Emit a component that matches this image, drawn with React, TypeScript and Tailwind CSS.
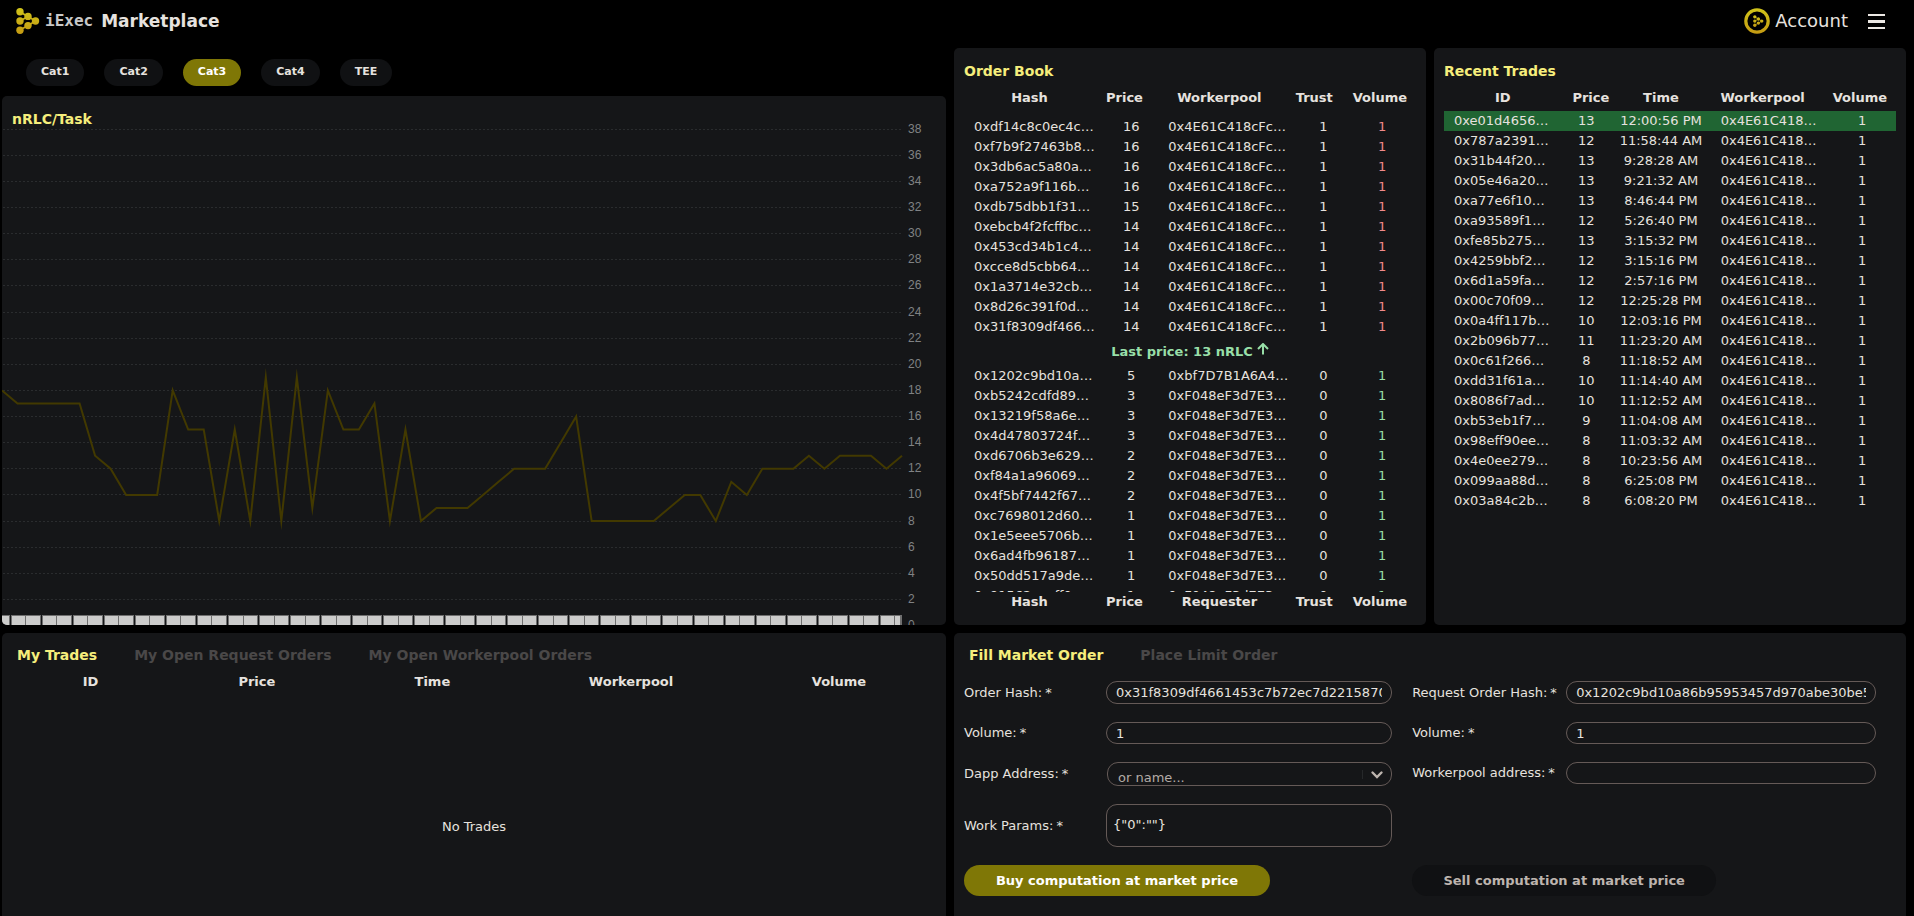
import React, { useState } from "react";

interface Order {
  hash: string;
  price: number;
  party: string;
  trust: number;
  volume: number;
}

interface Trade {
  id: string;
  price: number;
  time: string;
}

const POOL = "0x4E61C418cFc…";
const REQUESTER = "0xF048eF3d7E3…";

const ask = (hash: string, price: number): Order => ({
  hash,
  price,
  party: POOL,
  trust: 1,
  volume: 1,
});

const bid = (hash: string, price: number, party = REQUESTER): Order => ({
  hash,
  price,
  party,
  trust: 0,
  volume: 1,
});

const asks: Order[] = [
  ask("0xdf14c8c0ec4c…", 16),
  ask("0xf7b9f27463b8…", 16),
  ask("0x3db6ac5a80a…", 16),
  ask("0xa752a9f116b…", 16),
  ask("0xdb75dbb1f31…", 15),
  ask("0xebcb4f2fcffbc…", 14),
  ask("0x453cd34b1c4…", 14),
  ask("0xcce8d5cbb64…", 14),
  ask("0x1a3714e32cb…", 14),
  ask("0x8d26c391f0d…", 14),
  ask("0x31f8309df466…", 14),
];

const bids: Order[] = [
  bid("0x1202c9bd10a…", 5, "0xbf7D7B1A6A4…"),
  bid("0xb5242cdfd89…", 3),
  bid("0x13219f58a6e…", 3),
  bid("0x4d47803724f…", 3),
  bid("0xd6706b3e629…", 2),
  bid("0xf84a1a96069…", 2),
  bid("0x4f5bf7442f67…", 2),
  bid("0xc7698012d60…", 1),
  bid("0x1e5eee5706b…", 1),
  bid("0x6ad4fb96187…", 1),
  bid("0x50dd517a9de…", 1),
  bid("0x91562eacff0…", 1),
];

const trades: Trade[] = [
  { id: "0xe01d4656…", price: 13, time: "12:00:56 PM" },
  { id: "0x787a2391…", price: 12, time: "11:58:44 AM" },
  { id: "0x31b44f20…", price: 13, time: "9:28:28 AM" },
  { id: "0x05e46a20…", price: 13, time: "9:21:32 AM" },
  { id: "0xa77e6f10…", price: 13, time: "8:46:44 PM" },
  { id: "0xa93589f1…", price: 12, time: "5:26:40 PM" },
  { id: "0xfe85b275…", price: 13, time: "3:15:32 PM" },
  { id: "0x4259bbf2…", price: 12, time: "3:15:16 PM" },
  { id: "0x6d1a59fa…", price: 12, time: "2:57:16 PM" },
  { id: "0x00c70f09…", price: 12, time: "12:25:28 PM" },
  { id: "0x0a4ff117b…", price: 10, time: "12:03:16 PM" },
  { id: "0x2b096b77…", price: 11, time: "11:23:20 AM" },
  { id: "0x0c61f266…", price: 8, time: "11:18:52 AM" },
  { id: "0xdd31f61a…", price: 10, time: "11:14:40 AM" },
  { id: "0x8086f7ad…", price: 10, time: "11:12:52 AM" },
  { id: "0xb53eb1f7…", price: 9, time: "11:04:08 AM" },
  { id: "0x98eff90ee…", price: 8, time: "11:03:32 AM" },
  { id: "0x4e0ee279…", price: 8, time: "10:23:56 AM" },
  { id: "0x099aa88d…", price: 8, time: "6:25:08 PM" },
  { id: "0x03a84c2b…", price: 8, time: "6:08:20 PM" },
];

const prices = [
  18, 17, 17, 17, 17, 17, 13, 12, 10, 10, 10, 18, 15, 15, 8, 15, 8, 19, 8, 19,
  9, 18, 15, 15, 17, 8, 15, 8, 9, 9, 9, 10, 11, 12, 12, 12, 14, 16, 8, 8, 8, 8,
  8, 9, 10, 10, 8, 11, 10, 12, 12, 12, 13, 12, 13, 13, 13, 12, 13,
];

const LogoMark: React.FC = () => (
  <>
    <path
      d="M4 4L12 8.500L4 13M19.500 13L12 17.500L4 22M12 8.500L19.500 13"
      stroke="url(#gold)"
      strokeWidth="1.800"
      fill="none"
    />
    <g fill="url(#gold)">
      <circle cx="4" cy="3.700" r="3.700" />
      <circle cx="12" cy="8.400" r="3.700" />
      <circle cx="4" cy="13" r="3.700" />
      <circle cx="19.500" cy="13" r="3.700" />
      <circle cx="12" cy="17.600" r="3.700" />
      <circle cx="4" cy="22.300" r="3.700" />
    </g>
  </>
);

const Header: React.FC = () => (
  <header className="mb-1.5 flex h-[42px] items-center justify-between pr-[29px] pl-4">
    <a href="#home" className="flex items-center">
      <svg width="24" height="26" viewBox="0 0 24 26" aria-hidden="true">
        <defs>
          <linearGradient
            id="gold"
            gradientUnits="userSpaceOnUse"
            x1="0"
            y1="0"
            x2="0"
            y2="26"
          >
            <stop offset="0" stopColor="#d0c41a" />
            <stop offset="1" stopColor="#c49a12" />
          </linearGradient>
        </defs>
        <LogoMark />
      </svg>
      <span className="ml-[5px] font-['DejaVu_Sans_Mono',monospace] text-base leading-5 font-bold text-[#c8c8c8]">
        iExec
      </span>
      <span className="ml-2 text-[17px] leading-5 font-bold">Marketplace</span>
    </a>
    <div className="flex items-center gap-5">
      <button type="button" className="flex items-center gap-[5px]">
        <svg width="26" height="26" viewBox="0 0 26 26" aria-hidden="true">
          <circle
            cx="13"
            cy="13"
            r="11.200"
            fill="none"
            stroke="url(#gold)"
            strokeWidth="3.200"
          />
          <g transform="translate(9 7.200) scale(0.450)">
            <LogoMark />
          </g>
        </svg>
        <span className="text-lg leading-6">Account</span>
      </button>
      <button type="button" aria-label="Menu" className="flex flex-col gap-1">
        <span className="h-[2px] w-[17px] bg-[#ece8e4]" />
        <span className="h-[3px] w-[17px] bg-[#ece8e4]" />
        <span className="h-[2px] w-[17px] bg-[#ece8e4]" />
      </button>
    </div>
  </header>
);

const categories = ["Cat1", "Cat2", "Cat3", "Cat4", "TEE"];

const Categories: React.FC = () => {
  const [selected, setSelected] = useState("Cat3");

  return (
    <nav className="flex gap-5 pt-[11px] pb-2.5 pl-6">
      {categories.map((cat) => (
        <button
          key={cat}
          type="button"
          onClick={() => setSelected(cat)}
          className={`h-[27px] rounded-full px-[15px] text-[11px] font-bold ${
            cat === selected ? "bg-[#7f7706] text-white" : "bg-[#101113]"
          }`}
        >
          {cat}
        </button>
      ))}
    </nav>
  );
};

const STEP = 900 / (prices.length - 1);
const priceY = (price: number) => 529.5 - price * 13.06;

const PriceChart: React.FC = () => {
  const ticks = Array.from({ length: 20 }, (_, i) => i * 2);
  const points = prices.map((p, i) => `${i * STEP},${priceY(p)}`).join(" ");

  return (
    <section className="relative overflow-hidden rounded-[5px] bg-[#151618]">
      <h2 className="absolute top-3 left-2.5 text-sm leading-[22px] font-bold text-[#f6ee7c]">
        nRLC/Task
      </h2>
      <svg viewBox="0 0 944 529" className="block w-full" role="img">
        <g stroke="#2a2c2e" strokeDasharray="2 2" shapeRendering="crispEdges">
          {ticks.slice(1).map((t) => (
            <line key={t} x1="1" x2="900" y1={priceY(t)} y2={priceY(t)} />
          ))}
        </g>
        <g
          fill="#808284"
          fontSize="12"
          fontFamily="Liberation Sans, Arial, sans-serif"
        >
          {ticks.map((t) => (
            <text key={t} x="906" y={priceY(t) + 3.5}>
              {t}
            </text>
          ))}
        </g>
        <polyline
          points={points}
          fill="none"
          stroke="#423900"
          strokeWidth="2"
          strokeMiterlimit="20"
        />
        <g shapeRendering="crispEdges">
          <rect x="0" y="519" width="900" height="10" fill="#6f6f6f" />
          {prices.map((_, i) => {
            const left = Math.max(0, Math.round((i - 0.5) * STEP) + 1);
            const right = Math.min(899, Math.round((i + 0.5) * STEP));
            return (
              <rect
                key={i}
                x={left + (left && i % 2 ? 1 : 0)}
                y="520"
                width={right - left - 1}
                height="9"
                fill="#cccccb"
              />
            );
          })}
          {prices.map((_, i) =>
            i % 2 ? (
              <rect
                key={i}
                x={Math.round((i - 0.5) * STEP)}
                y="519"
                width="1"
                height="10"
                fill="#151618"
              />
            ) : null
          )}
        </g>
      </svg>
    </section>
  );
};

const bookHead = ["w-[29%]", "w-[13%]", "w-[29%]", "w-[13%]", "w-[16%]"];

const BookLabels: React.FC<{ party: string }> = ({ party }) => (
  <tr>
    {["Hash", "Price", party, "Trust", "Volume"].map((label, i) => (
      <th key={label} className={`${bookHead[i]} p-0`}>
        {label}
      </th>
    ))}
  </tr>
);

const OrderRow: React.FC<{ order: Order; color: string }> = ({
  order,
  color,
}) => (
  <tr className="table h-5 w-full table-fixed text-center">
    <td className="w-[31%] p-0 pl-2.5 text-left whitespace-nowrap">
      {order.hash}
    </td>
    <td className="w-[12%] p-0">{order.price}</td>
    <td className="w-[31%] p-0 pl-2.5 text-left whitespace-nowrap">
      {order.party}
    </td>
    <td className="w-[11%] p-0">{order.trust}</td>
    <td className={`w-[15%] p-0 ${color}`}>{order.volume}</td>
  </tr>
);

const PanelTitle: React.FC<{ children: React.ReactNode }> = ({ children }) => (
  <h2 className="pt-3 pb-0.5 text-sm leading-[22px] font-bold text-[#f6ee7c]">
    {children}
  </h2>
);

const OrderBook: React.FC = () => (
  <section className="rounded-[5px] bg-[#151618] px-2.5">
    <PanelTitle>Order Book</PanelTitle>
    <table className="block text-[13px] leading-5">
      <thead className="table h-[27px] w-full table-fixed">
        <BookLabels party="Workerpool" />
      </thead>
      <tbody className="block pt-1.5">
        {asks.map((order) => (
          <OrderRow key={order.hash} order={order} color="text-[#f08a8a]" />
        ))}
      </tbody>
      <tbody className="table h-[29px] w-full">
        <tr>
          <td className="p-0 text-center font-bold text-[#98dfa8]">
            Last price: 13 nRLC
            <svg
              width="12"
              height="13"
              viewBox="0 0 12 13"
              className="ml-1 inline-block align-baseline"
              aria-hidden="true"
            >
              <path
                d="M6 11.500V1.500M1 6L6 1L11 6"
                fill="none"
                stroke="currentColor"
                strokeWidth="2"
              />
            </svg>
          </td>
        </tr>
      </tbody>
      <tbody className="block max-h-[226px] overflow-hidden">
        {bids.map((order) => (
          <OrderRow key={order.hash} order={order} color="text-[#98dfa8]" />
        ))}
      </tbody>
      <tfoot className="table w-full table-fixed">
        <BookLabels party="Requester" />
      </tfoot>
    </table>
  </section>
);

const tradeHead = [
  { label: "ID", width: "w-[26%]" },
  { label: "Price", width: "w-[13%]" },
  { label: "Time", width: "w-[18%]" },
  { label: "Workerpool", width: "w-[27%]" },
  { label: "Volume", width: "w-[16%]" },
];

const RecentTrades: React.FC = () => (
  <section className="rounded-[5px] bg-[#151618] px-2.5">
    <PanelTitle>Recent Trades</PanelTitle>
    <table className="block text-[13px] leading-5">
      <thead className="table h-[27px] w-full table-fixed">
        <tr>
          {tradeHead.map(({ label, width }) => (
            <th key={label} className={`${width} p-0`}>
              {label}
            </th>
          ))}
        </tr>
      </thead>
      <tbody className="table w-full table-fixed">
        {trades.map((trade, i) => (
          <tr
            key={trade.id}
            className={`h-5 text-center whitespace-nowrap ${
              i === 0 ? "bg-[#206533]" : ""
            }`}
          >
            <td className="w-[26%] p-0 pl-2.5 text-left">{trade.id}</td>
            <td className="w-[11%] p-0">{trade.price}</td>
            <td className="w-[22%] p-0">{trade.time}</td>
            <td className="w-[26%] p-0 pl-2.5 text-left">0x4E61C418…</td>
            <td className="w-[15%] p-0">1</td>
          </tr>
        ))}
      </tbody>
    </table>
  </section>
);

interface TabsProps {
  tabs: string[];
}

const Tabs: React.FC<TabsProps> = ({ tabs }) => {
  const [active, setActive] = useState(tabs[0]);

  return (
    <div className="mt-1 flex h-9 items-center gap-[37px] pl-[5px]">
      {tabs.map((tab) => (
        <button
          key={tab}
          type="button"
          onClick={() => setActive(tab)}
          className={`text-sm font-bold ${
            tab === active ? "text-[#f6ee7c]" : "text-[#4a4848]"
          }`}
        >
          {tab}
        </button>
      ))}
    </div>
  );
};

const MyTrades: React.FC = () => (
  <section className="flex flex-col rounded-t-[5px] bg-[#151618] px-2.5">
    <Tabs
      tabs={["My Trades", "My Open Request Orders", "My Open Workerpool Orders"]}
    />
    <table className="w-full table-fixed text-[13px] leading-[18px]">
      <thead>
        <tr>
          <th className="w-[17%] p-0">ID</th>
          <th className="w-[19%] p-0">Price</th>
          <th className="w-[19%] p-0">Time</th>
          <th className="w-[24%] p-0">Workerpool</th>
          <th className="w-[21%] p-0">Volume</th>
        </tr>
      </thead>
    </table>
    <p className="pt-[126px] text-center text-[13px] leading-5">No Trades</p>
  </section>
);

const inputClass =
  "w-full min-w-0 rounded-[11px] border border-[#655a57] bg-transparent px-[9px] text-[13px] outline-none";

interface FieldProps {
  id: string;
  label: string;
  wide?: boolean;
  children: React.ReactNode;
}

const Field: React.FC<FieldProps> = ({ id, label, wide, children }) => (
  <div className="flex items-center">
    <label
      htmlFor={id}
      className={`shrink-0 whitespace-nowrap ${wide ? "w-[154px]" : "w-[142px]"}`}
    >
      {label}:<span className="ml-[3px]">*</span>
    </label>
    {children}
  </div>
);

const OrderForm: React.FC = () => {
  const [form, setForm] = useState({
    orderHash: "0x31f8309df4661453c7b72ec7d2215870c4e9a1b6",
    buyVolume: "1",
    params: '{"0":""}',
    requestHash: "0x1202c9bd10a86b95953457d970abe30be55c1f7a",
    sellVolume: "1",
    workerpool: "",
  });

  const handleChange = (
    e: React.ChangeEvent<HTMLInputElement | HTMLTextAreaElement>
  ) => {
    const { name, value } = e.target;
    setForm((prev) => ({ ...prev, [name]: value }));
  };

  return (
    <section className="col-span-2 rounded-t-[5px] bg-[#151618] px-2.5">
      <Tabs tabs={["Fill Market Order", "Place Limit Order"]} />
      <form
        onSubmit={(e) => e.preventDefault()}
        className="mt-2 grid grid-cols-[12fr_13fr] gap-5 pr-5 text-[13px] leading-5"
      >
        <div className="flex min-w-0 flex-col gap-[18px]">
          <Field id="orderHash" label="Order Hash">
            <input
              id="orderHash"
              name="orderHash"
              value={form.orderHash}
              onChange={handleChange}
              className={`${inputClass} h-[23px]`}
            />
          </Field>
          <Field id="buyVolume" label="Volume">
            <input
              id="buyVolume"
              name="buyVolume"
              value={form.buyVolume}
              onChange={handleChange}
              className={`${inputClass} h-[22px]`}
            />
          </Field>
          <Field id="dapp" label="Dapp Address">
            <div className="relative ml-px min-w-0 flex-1">
              <select
                id="dapp"
                defaultValue=""
                className="block h-6 w-full appearance-none rounded-[11px] border border-[#655a57] bg-[#151618] pt-[7px] pl-2.5 text-[13px] leading-4 text-[#b3aba6] outline-none"
              >
                <option value="">or name...</option>
              </select>
              <svg
                width="32"
                height="14"
                viewBox="0 0 32 14"
                className="pointer-events-none absolute top-1.5 right-0"
                aria-hidden="true"
              >
                <path d="M2.500 2V11" stroke="#26282a" />
                <path
                  d="M12.500 4.500L17 9L21.500 4.500"
                  fill="none"
                  stroke="#bdb4ae"
                  strokeWidth="2.400"
                  strokeLinecap="round"
                />
              </svg>
            </div>
          </Field>
          <Field id="params" label="Work Params">
            <textarea
              id="params"
              name="params"
              value={form.params}
              onChange={handleChange}
              className="block h-[43px] w-full min-w-0 resize-none rounded-[11px] border border-[#655a57] bg-transparent px-1.5 pt-2.5 leading-5 outline-none"
            />
          </Field>
          <button
            type="submit"
            className="h-[31px] w-[306px] max-w-full rounded-full bg-[#7f7706] font-bold text-white"
          >
            Buy computation at market price
          </button>
        </div>
        <div className="flex min-w-0 flex-col gap-[18px]">
          <Field id="requestHash" label="Request Order Hash" wide>
            <input
              id="requestHash"
              name="requestHash"
              value={form.requestHash}
              onChange={handleChange}
              className={`${inputClass} h-[23px]`}
            />
          </Field>
          <Field id="sellVolume" label="Volume" wide>
            <input
              id="sellVolume"
              name="sellVolume"
              value={form.sellVolume}
              onChange={handleChange}
              className={`${inputClass} h-[22px]`}
            />
          </Field>
          <Field id="workerpool" label="Workerpool address" wide>
            <input
              id="workerpool"
              name="workerpool"
              value={form.workerpool}
              onChange={handleChange}
              className={`${inputClass} h-[22px]`}
            />
          </Field>
          <button
            type="button"
            className="mt-auto h-[31px] w-[304px] max-w-full rounded-full bg-[#101113] font-bold text-[#bdb4ae]"
          >
            Sell computation at market price
          </button>
        </div>
      </form>
    </section>
  );
};

const App: React.FC = () => (
  <div className="flex min-h-screen flex-col bg-black font-['DejaVu_Sans',sans-serif] text-[#e6e2df]">
    <Header />
    <main className="grid flex-1 grid-cols-[minmax(0,2fr)_minmax(0,1fr)_minmax(0,1fr)] grid-rows-[auto_1fr] gap-2 pr-2 pl-0.5">
      <div>
        <Categories />
        <PriceChart />
      </div>
      <OrderBook />
      <RecentTrades />
      <MyTrades />
      <OrderForm />
    </main>
  </div>
);

export default App;
